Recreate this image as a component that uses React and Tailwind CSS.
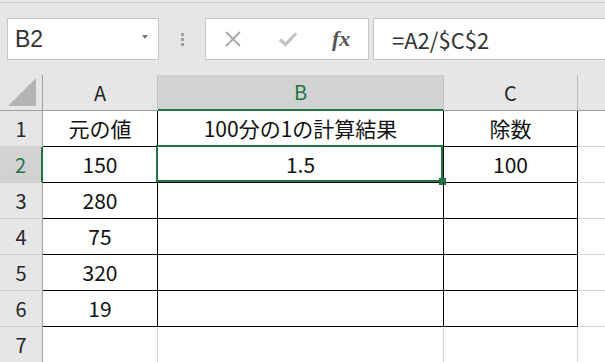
import React from 'react';

const font = { fontFamily: '"Noto Sans CJK JP", "Noto Sans", sans-serif' };

const rows = [
  { n: 1, a: '元の値', b: '100分の1の計算結果', c: '除数' },
  { n: 2, a: '150', b: '1.5', c: '100' },
  { n: 3, a: '280', b: '', c: '' },
  { n: 4, a: '75', b: '', c: '' },
  { n: 5, a: '320', b: '', c: '' },
  { n: 6, a: '19', b: '', c: '' },
  { n: 7, a: '', b: '', c: '', blank: true },
];

function Toolbar() {
  return (
    <div className="h-[75px] bg-[#e6e6e6] flex flex-col">
      <div className="h-[2px] bg-[#e9e9e9]" />
      <div className="h-px bg-[#cdcdcd]" />
      <div className="flex items-start pt-[15px] pl-[7px]">
        {/* Name box */}
        <div className="w-[152px] h-[42px] bg-white border border-[#c6c6c6] flex items-center justify-between pl-[7px] pr-[10px]">
          <span className="text-[23px] text-[#333] leading-none" style={{ fontFamily: '"Liberation Sans", sans-serif' }}>B2</span>
          <svg width="6" height="4" viewBox="0 0 6 4" className="mt-[-4px]">
            <polygon points="0,0 6,0 3,4" fill="#777" />
          </svg>
        </div>
        {/* dots */}
        <div className="w-[46px] h-[42px] flex flex-col items-center justify-center gap-[2px]">
          <div className="w-[3px] h-[3px] bg-[#a0a0a0]" />
          <div className="w-[3px] h-[3px] bg-[#a0a0a0]" />
          <div className="w-[3px] h-[3px] bg-[#a0a0a0]" />
        </div>
        {/* buttons */}
        <div className="w-[164px] h-[42px] bg-white border border-[#c6c6c6] flex items-center">
          <svg width="18" height="16" viewBox="0 0 18 16" className="ml-[18px]">
            <path d="M2 1 L16 15 M16 1 L2 15" stroke="#a9a9a9" strokeWidth="1.8" fill="none" />
          </svg>
          <svg width="20" height="16" viewBox="0 0 20 16" className="ml-[36px]">
            <path d="M2 8.5 L7.5 13.5 L18 2.5" stroke="#c3c3c3" strokeWidth="3.2" fill="none" />
          </svg>
          <span className="ml-[34px] text-[22px] italic font-bold text-[#555] leading-none" style={{ fontFamily: '"Liberation Serif", "DejaVu Serif", serif' }}>fx</span>
        </div>
        {/* formula */}
        <div className="ml-[4px] flex-1 h-[42px] bg-white border-y border-l border-[#c6c6c6] flex items-center pl-[18px]">
          <span className="text-[22px] text-[#333] leading-none" style={font}>=A2/$C$2</span>
        </div>
      </div>
    </div>
  );
}

function HeaderRow() {
  return (
    <div className="flex h-[36px]">
      <div className="w-[43px] shrink-0 bg-[#e6e6e6] border-r border-b border-r-[#a0a0a0] border-b-[#9e9e9e] flex items-center justify-center">
        <svg width="29" height="29" viewBox="0 0 29 29" className="ml-[3px] mt-[-1px]">
          <polygon points="28,0 28,28 0,28" fill="#b4b4b4" />
        </svg>
      </div>
      <div className="w-[115px] shrink-0 bg-[#e6e6e6] border-r border-b border-r-[#c0c0c0] border-b-[#9e9e9e] flex items-center justify-center text-[20px] text-[#262626]">A</div>
      <div className="w-[286px] shrink-0 bg-[#d2d2d2] border-r border-r-[#c0c0c0] border-b-2 border-b-[#217346] flex items-center justify-center text-[20px] text-[#217346]">B</div>
      <div className="w-[134px] shrink-0 bg-[#e6e6e6] border-r border-b border-r-[#b8b8b8] border-b-[#9e9e9e] flex items-center justify-center text-[20px] text-[#262626]">C</div>
      <div className="flex-1 bg-[#e6e6e6] border-b border-b-[#9e9e9e]" />
    </div>
  );
}

function DataRow({ row }) {
  const selected = row.n === 2;
  const line = row.blank ? 'border-r-[#d4d4d4]' : 'border-r-black';
  const bottom = row.blank ? 'border-b-[#d4d4d4]' : 'border-b-black';
  return (
    <div className="flex h-[36px] text-[21px] text-[#111]">
      <div
        className={`w-[43px] shrink-0 border-b border-b-[#cfcfcf] flex items-center justify-center text-[20px] ${
          selected ? 'bg-[#d2d2d2] text-[#217346] border-r-2 border-r-[#217346]' : 'bg-[#e6e6e6] text-[#262626] border-r border-r-[#a0a0a0]'
        }`}
      >
        {row.n}
      </div>
      <div className={`w-[115px] shrink-0 border-r border-b ${line} ${bottom} flex items-center justify-center`}>{row.a}</div>
      <div className={`relative w-[286px] shrink-0 border-r border-b ${line} ${bottom} flex items-center justify-center`}>
        {row.b}
        {selected && (
          <>
            <div className="absolute -left-[2px] -top-[2px] right-0 bottom-0 border-2 border-[#217346]" />
            <div className="absolute -right-[3px] -bottom-[3px] w-[7px] h-[7px] bg-[#217346]" />
          </>
        )}
      </div>
      <div className={`w-[134px] shrink-0 border-r border-b ${line} ${bottom} flex items-center justify-center`}>{row.c}</div>
      <div className="flex-1 border-b border-b-[#d4d4d4]" />
    </div>
  );
}

export default function App() {
  return (
    <div className="w-[605px] h-[362px] overflow-hidden bg-white" style={font}>
      <Toolbar />
      <HeaderRow />
      {rows.map((row) => (
        <DataRow key={row.n} row={row} />
      ))}
    </div>
  );
}
